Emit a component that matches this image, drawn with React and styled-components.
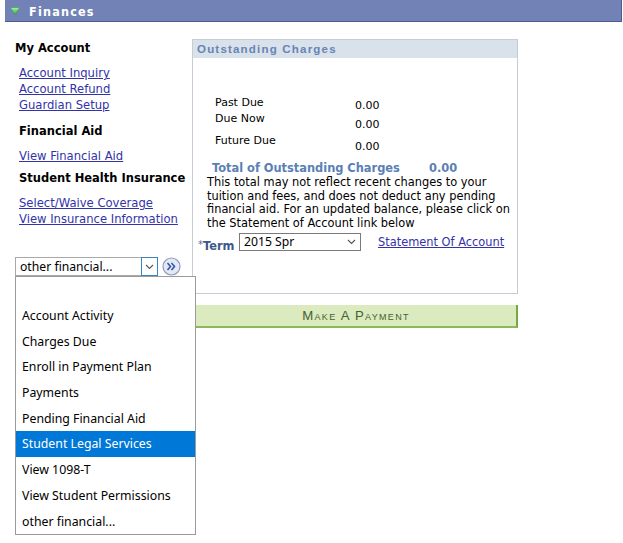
import React from "react";
import styled, { createGlobalStyle } from "styled-components";

const Global = createGlobalStyle`
  html, body { margin: 0; padding: 0; background: #fff; }
  body { font-family: "DejaVu Sans", Verdana, sans-serif; font-size: 11px; color: #000; }
  * { box-sizing: border-box; }
`;

const Page = styled.div`
  width: 623px;
  height: 543px;
  overflow: hidden;
  position: relative;
`;

const Header = styled.div`
  margin-left: 5px;
  width: 617px;
  height: 22px;
  background: #7282b6;
  border-bottom: 1px solid #4d5c8c;
  border-right: 1px solid #4d5c8c;
  display: flex;
  align-items: center;
  padding-left: 5px;
  gap: 9px;
`;

const HeaderTitle = styled.span`
  color: #fff;
  font-family: "Liberation Sans Narrow", "DejaVu Sans Condensed", "Liberation Sans", sans-serif;
  font-weight: bold;
  font-size: 12.5px;
  letter-spacing: 1.2px;
  margin-top: 1px;
`;

const Main = styled.div`
  display: flex;
  padding-left: 15px;
`;

const LeftCol = styled.div`
  width: 177px;
  padding-top: 18px;
  display: flex;
  flex-direction: column;
`;

const Heading = styled.div`
  font-family: "DejaVu Sans", Verdana, sans-serif;
  font-weight: bold;
  font-size: 11.5px;
  line-height: 16px;
  margin-top: ${(p) => p.$mt || 0}px;
  padding-left: ${(p) => p.$indent || 0}px;
  white-space: nowrap;
`;

const LinkList = styled.div`
  display: flex;
  flex-direction: column;
  margin-top: ${(p) => p.$mt || 0}px;
  padding-left: 4px;
`;

const NavLink = styled.a`
  font-family: "DejaVu Sans", Verdana, sans-serif;
  font-size: 11.6px;
  line-height: ${(p) => p.$lh || 16}px;
  color: #3333a8;
  text-decoration: underline;
  white-space: nowrap;
  cursor: pointer;
`;

const SelectWrap = styled.div`
  position: relative;
  margin-top: 30px;
  display: flex;
  align-items: center;
  gap: 4px;
`;

const SelectBox = styled.div`
  width: 143px;
  height: 19px;
  border: 1px solid #a9a9a9;
  display: flex;
  align-items: center;
  font-family: "Noto Sans", "Open Sans", sans-serif;
  font-size: 12.2px;
  background: #fff;
`;

const SelectText = styled.span`
  flex: 1;
  padding-left: 4px;
  white-space: nowrap;
  overflow: hidden;
  line-height: 17px;
`;

const SelectArrow = styled.span`
  width: 17px;
  height: 19px;
  margin: -1px -1px -1px 0;
  border: 1px solid #3b84c2;
  background: #fff;
  display: flex;
  align-items: center;
  justify-content: center;
`;

const ListBox = styled.div`
  position: absolute;
  top: 19px;
  left: 0;
  width: 181px;
  height: 259px;
  background: #fff;
  border: 1px solid #9a9a9a;
  z-index: 5;
  display: flex;
  flex-direction: column;
`;

const ListItem = styled.div`
  height: 25.7px;
  flex: none;
  display: flex;
  align-items: center;
  padding-left: 6px;
  font-family: "Noto Sans", "Open Sans", sans-serif;
  font-size: 12.3px;
  white-space: nowrap;
  background: ${(p) => (p.$active ? "#0078d7" : "#fff")};
  color: ${(p) => (p.$active ? "#fff" : "#000")};
`;

const RightCol = styled.div`
  display: flex;
  flex-direction: column;
  padding-top: 17px;
`;

const ChargesBox = styled.div`
  width: 326px;
  height: 255px;
  border: 1px solid #c6ccd6;
  display: flex;
  flex-direction: column;
`;

const BoxHeader = styled.div`
  height: 18px;
  background: #d9e1eb;
  color: #6784b3;
  font-family: "Liberation Sans", Arial, sans-serif;
  font-weight: bold;
  font-size: 11.5px;
  letter-spacing: 1.2px;
  display: flex;
  align-items: center;
  padding-left: 4px;
`;

const BoxBody = styled.div`
  padding-top: 38px;
  display: flex;
  flex-direction: column;
`;

const AmountRow = styled.div`
  display: grid;
  grid-template-columns: 140px auto;
  height: ${(p) => p.$h}px;
  padding-left: 22px;
  font-family: "DejaVu Sans", Verdana, sans-serif;
  font-size: 11px;
  line-height: 14px;
`;

const AmountValue = styled.span`
  margin-top: ${(p) => p.$drop}px;
`;

const TotalRow = styled.div`
  display: grid;
  grid-template-columns: 217px auto;
  margin-top: 7px;
  padding-left: 19px;
  font-family: "DejaVu Sans", Verdana, sans-serif;
  font-weight: bold;
  font-size: 11.4px;
  line-height: 14px;
  color: #5a80b6;
`;

const Note = styled.p`
  margin: 1px 0 0 14px;
  font-family: "DejaVu Sans", Verdana, sans-serif;
  font-size: 11.4px;
  line-height: 13.7px;
  white-space: nowrap;
`;

const TermRow = styled.div`
  display: flex;
  align-items: flex-start;
  margin-top: 2px;
  padding-left: 5px;
`;

const TermLabel = styled.span`
  font-family: "DejaVu Sans", Verdana, sans-serif;
  font-size: 11.4px;
  color: #3d5789;
  margin-top: 6px;
  width: 41px;
  white-space: nowrap;
  & b { font-weight: bold; }
  & i { font-style: normal; font-size: 10px; color: #5a6d96; position: relative; top: -2px; }
`;

const TermSelect = styled.div`
  width: 122px;
  height: 18px;
  border: 1px solid #7a7a7a;
  display: flex;
  align-items: center;
  justify-content: space-between;
  padding: 0 4px 0 4px;
  font-family: "Noto Sans", "Open Sans", sans-serif;
  font-size: 12.2px;
  line-height: 16px;
`;

const StatementLink = styled(NavLink)`
  margin-left: 17px;
  margin-top: 1px;
  font-size: 11.4px;
`;

const PayButton = styled.div`
  margin-top: 11px;
  margin-left: 4px;
  width: 322px;
  height: 23px;
  background: #dceabf;
  border-right: 2px solid #76a844;
  border-bottom: 2px solid #8cb85c;
  display: flex;
  align-items: center;
  justify-content: center;
  font-family: "Liberation Sans", Arial, sans-serif;
  font-size: 13.2px;
  font-variant: small-caps;
  letter-spacing: 1.3px;
  color: #44622f;
`;

const Chevron = () => (
  <svg width="9" height="6" viewBox="0 0 9 6">
    <polyline points="1,1 4.5,4.5 8,1" fill="none" stroke="#555" strokeWidth="1.1" />
  </svg>
);

const GoIcon = () => (
  <svg width="19" height="19" viewBox="0 0 19 19">
    <circle cx="9.5" cy="9.5" r="8.5" fill="#e4e8f2" stroke="#8f9cc2" strokeWidth="1.2" />
    <polyline points="5.5,6 8.5,9.5 5.5,13" fill="none" stroke="#3356a8" strokeWidth="1.6" />
    <polyline points="9.5,6 12.5,9.5 9.5,13" fill="none" stroke="#3356a8" strokeWidth="1.6" />
  </svg>
);

const Triangle = () => (
  <svg width="10" height="8" viewBox="0 0 10 8">
    <defs>
      <linearGradient id="tg" x1="0" y1="0" x2="0" y2="1">
        <stop offset="0" stopColor="#a6f0ac" />
        <stop offset="1" stopColor="#2fa84a" />
      </linearGradient>
    </defs>
    <polygon points="0.3,0.5 9.7,0.5 5,7.8" fill="url(#tg)" stroke="#3e9a50" strokeWidth="0.6" />
  </svg>
);

const items = [
  "",
  "Account Activity",
  "Charges Due",
  "Enroll in Payment Plan",
  "Payments",
  "Pending Financial Aid",
  "Student Legal Services",
  "View 1098-T",
  "View Student Permissions",
  "other financial...",
];

export default function App() {
  return (
    <Page>
      <Global />
      <Header>
        <Triangle />
        <HeaderTitle>Finances</HeaderTitle>
      </Header>
      <Main>
        <LeftCol>
          <Heading>My Account</Heading>
          <LinkList $mt={9}>
            <NavLink>Account Inquiry</NavLink>
            <NavLink>Account Refund</NavLink>
            <NavLink>Guardian Setup</NavLink>
          </LinkList>
          <Heading $mt={10} $indent={4}>Financial Aid</Heading>
          <LinkList $mt={9}>
            <NavLink>View Financial Aid</NavLink>
          </LinkList>
          <Heading $mt={6} $indent={4}>Student Health Insurance</Heading>
          <LinkList $mt={9}>
            <NavLink>Select/Waive Coverage</NavLink>
            <NavLink>View Insurance Information</NavLink>
          </LinkList>
          <SelectWrap>
            <SelectBox>
              <SelectText>other financial...</SelectText>
              <SelectArrow>
                <Chevron />
              </SelectArrow>
            </SelectBox>
            <GoIcon />
            <ListBox>
              {items.map((it, i) => (
                <ListItem key={i} $active={it === "Student Legal Services"}>
                  {it}
                </ListItem>
              ))}
            </ListBox>
          </SelectWrap>
        </LeftCol>
        <RightCol>
          <ChargesBox>
            <BoxHeader>Outstanding Charges</BoxHeader>
            <BoxBody>
              <AmountRow $h={16}>
                <span>Past Due</span>
                <AmountValue $drop={3}>0.00</AmountValue>
              </AmountRow>
              <AmountRow $h={22}>
                <span>Due Now</span>
                <AmountValue $drop={6}>0.00</AmountValue>
              </AmountRow>
              <AmountRow $h={20}>
                <span>Future Due</span>
                <AmountValue $drop={6}>0.00</AmountValue>
              </AmountRow>
              <TotalRow>
                <span>Total of Outstanding Charges</span>
                <span>0.00</span>
              </TotalRow>
              <Note>
                This total may not reflect recent changes to your
                <br />
                tuition and fees, and does not deduct any pending
                <br />
                financial aid. For an updated balance, please click on
                <br />
                the Statement of Account link below
              </Note>
              <TermRow>
                <TermLabel>
                  <i>*</i>
                  <b>Term</b>
                </TermLabel>
                <TermSelect>
                  <span>2015 Spr</span>
                  <Chevron />
                </TermSelect>
                <StatementLink>Statement Of Account</StatementLink>
              </TermRow>
            </BoxBody>
          </ChargesBox>
          <PayButton>Make A Payment</PayButton>
        </RightCol>
      </Main>
    </Page>
  );
}
